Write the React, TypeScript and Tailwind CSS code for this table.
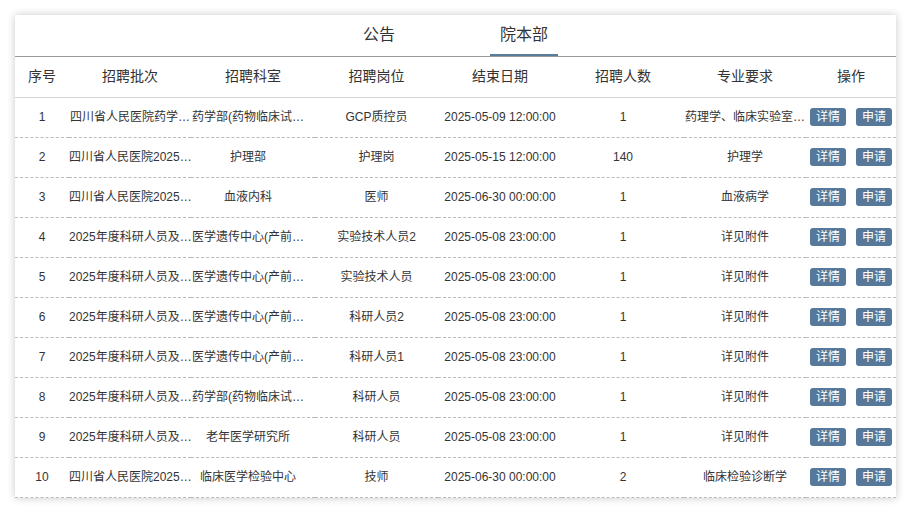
type JobRow = {
  batch: string;
  dept: string;
  post: string;
  endAt: string;
  count: number;
  major: string;
};

// texts are shown already shortened, as the list page does
const rows: JobRow[] = [
  { batch: "四川省人民医院药学…", dept: "药学部(药物临床试…", post: "GCP质控员", endAt: "2025-05-09 12:00:00", count: 1, major: "药理学、临床实验室…" },
  { batch: "四川省人民医院2025…", dept: "护理部", post: "护理岗", endAt: "2025-05-15 12:00:00", count: 140, major: "护理学" },
  { batch: "四川省人民医院2025…", dept: "血液内科", post: "医师", endAt: "2025-06-30 00:00:00", count: 1, major: "血液病学" },
  { batch: "2025年度科研人员及…", dept: "医学遗传中心(产前…", post: "实验技术人员2", endAt: "2025-05-08 23:00:00", count: 1, major: "详见附件" },
  { batch: "2025年度科研人员及…", dept: "医学遗传中心(产前…", post: "实验技术人员", endAt: "2025-05-08 23:00:00", count: 1, major: "详见附件" },
  { batch: "2025年度科研人员及…", dept: "医学遗传中心(产前…", post: "科研人员2", endAt: "2025-05-08 23:00:00", count: 1, major: "详见附件" },
  { batch: "2025年度科研人员及…", dept: "医学遗传中心(产前…", post: "科研人员1", endAt: "2025-05-08 23:00:00", count: 1, major: "详见附件" },
  { batch: "2025年度科研人员及…", dept: "药学部(药物临床试…", post: "科研人员", endAt: "2025-05-08 23:00:00", count: 1, major: "详见附件" },
  { batch: "2025年度科研人员及…", dept: "老年医学研究所", post: "科研人员", endAt: "2025-05-08 23:00:00", count: 1, major: "详见附件" },
  { batch: "四川省人民医院2025…", dept: "临床医学检验中心", post: "技师", endAt: "2025-06-30 00:00:00", count: 2, major: "临床检验诊断学" },
];

const heads = ["序号", "招聘批次", "招聘科室", "招聘岗位", "结束日期", "招聘人数", "专业要求", "操作"];

export default function App() {
  return (
    <div className="min-h-[514px] bg-white p-[15px] font-['Liberation_Sans','Noto_Sans_CJK_SC',sans-serif] text-[#333]">
      <div className="bg-white shadow-[0_0_8px_rgba(0,0,0,0.22)]">
        <div className="flex h-[42px] justify-center gap-[85px] border-b border-[#999]">
          {["公告", "院本部"].map((tab, i) => (
            <button
              key={tab}
              className={`h-full px-[10px] text-[16px] leading-[40px] text-[#333] ${
                i === 1 ? "border-b-2 border-[#5a7d9a]" : "border-b-2 border-transparent"
              }`}
            >
              {tab}
            </button>
          ))}
        </div>

        <table className="w-full table-fixed border-collapse text-center">
          <colgroup>
            <col className="w-[54px]" />
            <col className="w-[122px]" />
            <col className="w-[124px]" />
            <col className="w-[123px]" />
            <col className="w-[124px]" />
            <col className="w-[122px]" />
            <col className="w-[122px]" />
            <col className="w-[90px]" />
          </colgroup>
          <thead>
            <tr className="h-[40px] border-b border-[#d4d4d4]">
              {heads.map((h) => (
                <th key={h} className="p-0 text-[14px] font-normal text-[#333]">{h}</th>
              ))}
            </tr>
          </thead>
          <tbody>
            {rows.map((row, i) => (
              <tr key={i} className="h-[40px] border-b border-dashed border-[#bbb] text-[12px] text-[#333]">
                <td className="p-0">{i + 1}</td>
                <td className="overflow-hidden whitespace-nowrap p-0">{row.batch}</td>
                <td className="overflow-hidden whitespace-nowrap p-0 pr-[10px]">{row.dept}</td>
                <td className="overflow-hidden whitespace-nowrap p-0">{row.post}</td>
                <td className="p-0">{row.endAt}</td>
                <td className="p-0">{row.count}</td>
                <td className="overflow-hidden whitespace-nowrap p-0">{row.major}</td>
                <td className="p-0">
                  <div className="flex justify-center gap-[10px]">
                    <button className="h-[18px] w-[36px] rounded-[3px] bg-[#56799b] text-[12px] leading-[18px] text-white">详情</button>
                    <button className="h-[18px] w-[36px] rounded-[3px] bg-[#56799b] text-[12px] leading-[18px] text-white">申请</button>
                  </div>
                </td>
              </tr>
            ))}
          </tbody>
        </table>
      </div>
    </div>
  );
}
